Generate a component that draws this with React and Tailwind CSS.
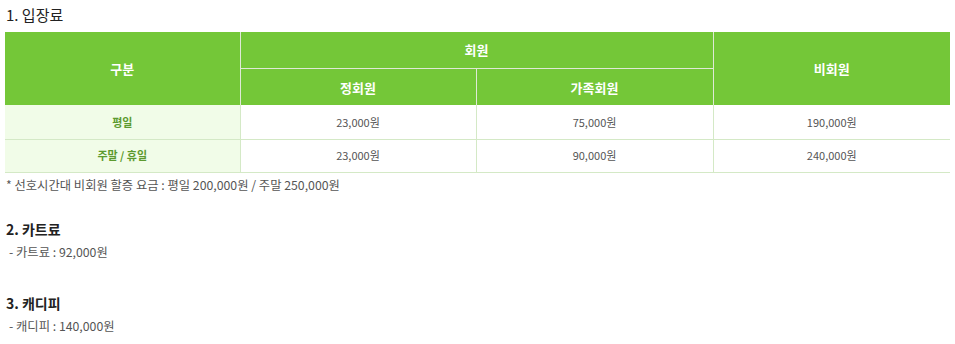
const font = { fontFamily: '"Noto Sans CJK KR", "Noto Sans", sans-serif' };

const rows = [
  { label: "평일", regular: "23,000원", family: "75,000원", guest: "190,000원", h: "h-[34px]" },
  { label: "주말 / 휴일", regular: "23,000원", family: "90,000원", guest: "240,000원", h: "h-[33px]" },
];

export default function App() {
  return (
    <div className="w-[955px] h-[344px] bg-white pl-[5px] pr-[5px] text-[#555]" style={font}>
      <h3 className="pt-[4px] pl-[1px] text-[15px] leading-[22px] font-normal text-[#222]">1. 입장료</h3>
      <table className="mt-[6px] w-[945px] table-fixed border-collapse text-center">
        <colgroup>
          <col className="w-[235px]" />
          <col className="w-[236px]" />
          <col className="w-[237px]" />
          <col className="w-[237px]" />
        </colgroup>
        <thead className="bg-[#74c738] text-white text-[13px] font-bold">
          <tr className="h-[36px]">
            <th rowSpan={2} className="border-r border-[#dfe9d6]">구분</th>
            <th colSpan={2} className="border-r border-b border-[#dfe9d6]">회원</th>
            <th rowSpan={2}>비회원</th>
          </tr>
          <tr className="h-[37px]">
            <th className="border-r border-[#dfe9d6] pt-[2px]">정회원</th>
            <th className="border-r border-[#dfe9d6] pt-[2px]">가족회원</th>
          </tr>
        </thead>
        <tbody className="text-[11px]">
          {rows.map((r) => (
            <tr key={r.label} className={`${r.h} border-b border-[#d4e9c6]`}>
              <td className="bg-[#f1fce8] font-bold text-[#5c9a2f] border-r border-[#d4e9c6]">{r.label}</td>
              <td className="border-r border-[#d4e9c6]">{r.regular}</td>
              <td className="border-r border-[#d4e9c6]">{r.family}</td>
              <td>{r.guest}</td>
            </tr>
          ))}
        </tbody>
      </table>
      <p className="mt-[2px] pl-[1px] text-[12.3px] leading-[20px]">* 선호시간대 비회원 할증 요금 : 평일 200,000원 / 주말 250,000원</p>

      <h3 className="mt-[24px] pl-[1px] text-[14px] leading-[20px] font-bold text-[#222]">2. 카트료</h3>
      <p className="mt-[3px] pl-[4px] text-[12.3px] leading-[20px]">- 카트료 : 92,000원</p>

      <h3 className="mt-[31px] pl-[1px] text-[14px] leading-[20px] font-bold text-[#222]">3. 캐디피</h3>
      <p className="mt-[3px] pl-[4px] text-[12.3px] leading-[20px]">- 캐디피 : 140,000원</p>
    </div>
  );
}
